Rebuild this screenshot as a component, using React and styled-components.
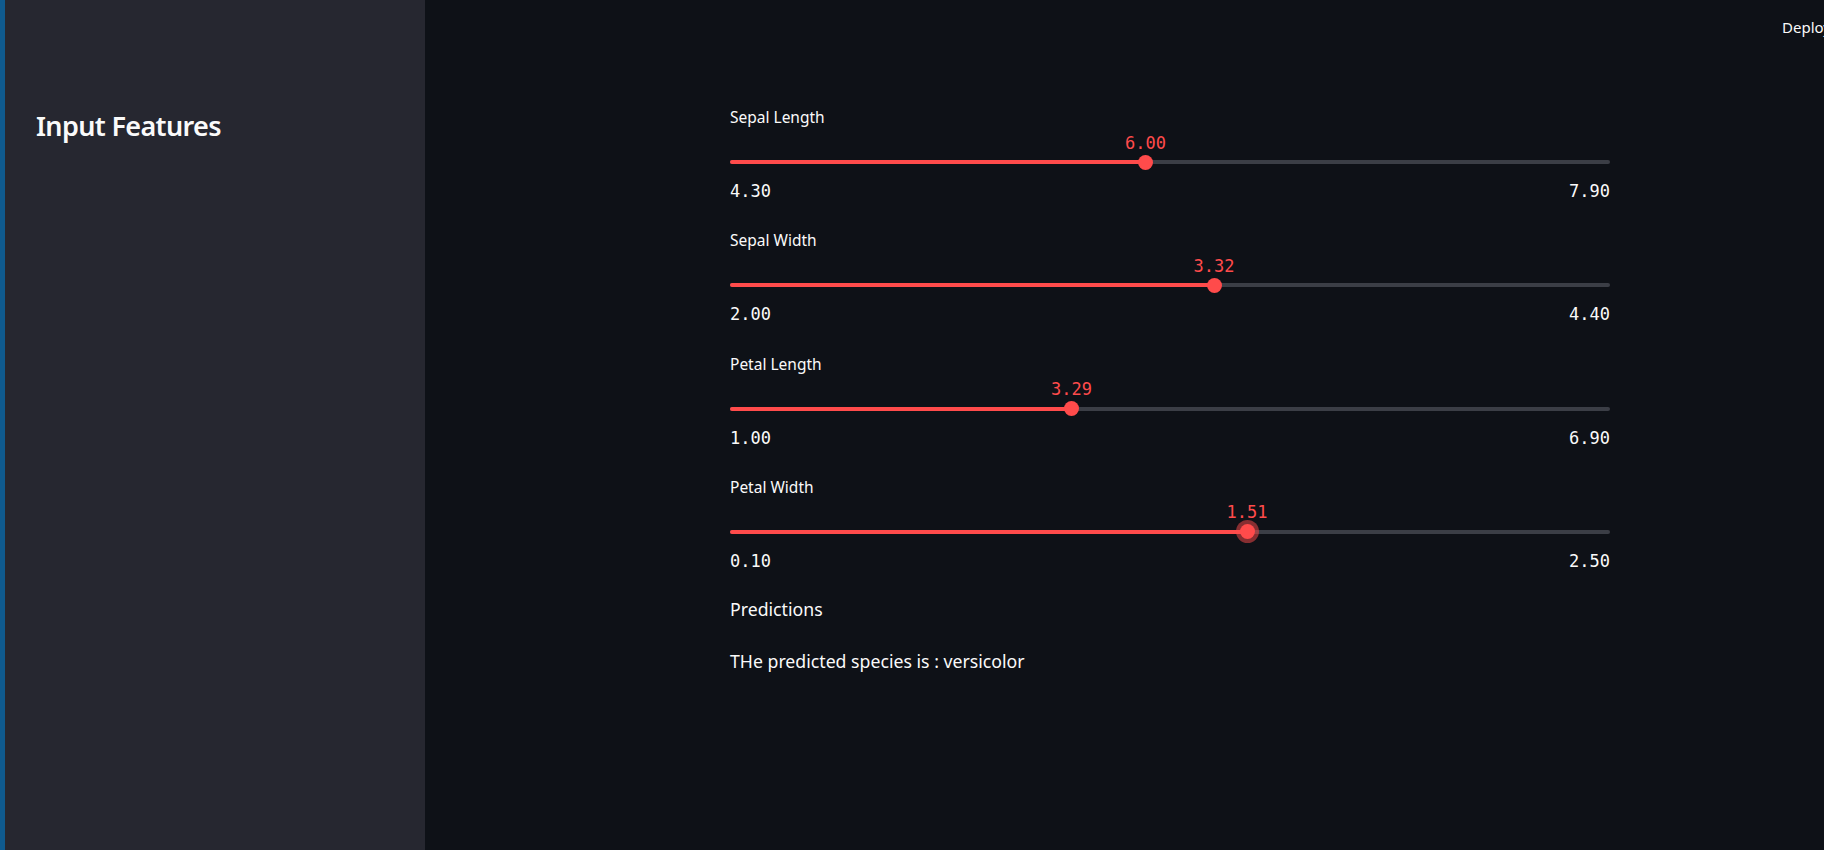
import styled, { createGlobalStyle } from 'styled-components';

const GlobalStyle = createGlobalStyle`
	html, body {
		margin: 0;
		padding: 0;
		background: #0e1117;
	}
	* {
		box-sizing: border-box;
	}
`;

const features = [
	{ label: 'Sepal Length', min: 4.3, max: 7.9, value: 6.0 },
	{ label: 'Sepal Width', min: 2.0, max: 4.4, value: 3.32 },
	{ label: 'Petal Length', min: 1.0, max: 6.9, value: 3.29 },
	{ label: 'Petal Width', min: 0.1, max: 2.5, value: 1.51, focused: true },
];

const Slider = ({ label, min, max, value, focused }) => {
	const pct = ((value - min) / (max - min)) * 100;

	return (
		<SliderBlock>
			<SliderLabel>{label}</SliderLabel>
			<SliderBody>
				<Track>
					<Fill style={{ width: `${pct}%` }} />
					<Thumb $focused={focused} style={{ left: `${pct}%` }}>
						<ThumbValue>{value.toFixed(2)}</ThumbValue>
					</Thumb>
				</Track>
			</SliderBody>
			<TickRow>
				<Tick>{min.toFixed(2)}</Tick>
				<Tick>{max.toFixed(2)}</Tick>
			</TickRow>
		</SliderBlock>
	);
};

const App = () => {
	return (
		<>
			<GlobalStyle />
			<Page>
				<Strip />
				<Sidebar>
					<SidebarTitle>Input Features</SidebarTitle>
				</Sidebar>
				<Main>
					<Toolbar>
						<DeployButton>Deploy</DeployButton>
					</Toolbar>
					<Content>
						<SliderList>
							{features.map((f) => (
								<Slider key={f.label} {...f} />
							))}
						</SliderList>
						<Subhead>Predictions</Subhead>
						<Result>THe predicted species is : versicolor</Result>
					</Content>
				</Main>
			</Page>
		</>
	);
};

export default App;

const Page = styled.div`
	display: flex;
	flex-direction: row;
	height: 100vh;
	width: 100vw;
	overflow: hidden;
	font-family: 'Noto Sans', 'Open Sans', sans-serif;
	color: #fafafa;
`;
const Strip = styled.div`
	width: 5px;
	flex-shrink: 0;
	background: #0f5a8e;
`;
const Sidebar = styled.aside`
	width: 420px;
	flex-shrink: 0;
	background: #262730;
	padding: 106px 31px 0;
`;
const SidebarTitle = styled.h2`
	margin: 0;
	font-size: 27px;
	line-height: 40px;
	font-weight: 600;
	letter-spacing: -0.65px;
`;
const Main = styled.main`
	flex: 1;
	display: flex;
	flex-direction: column;
	background: #0e1117;
	min-width: 0;
`;
const Toolbar = styled.div`
	height: 54px;
	display: flex;
	justify-content: flex-end;
	align-items: center;
	margin-right: -19px;
`;
const DeployButton = styled.span`
	font-size: 15px;
	line-height: 20px;
	color: #fafafa;
	padding: 0 12px;
	white-space: nowrap;
`;
const Content = styled.div`
	display: flex;
	flex-direction: column;
	width: 880px;
	margin-left: 305px;
	padding-top: 53px;
`;
const SliderList = styled.div`
	display: flex;
	flex-direction: column;
	gap: 29.3px;
`;
const SliderBlock = styled.div`
	display: flex;
	flex-direction: column;
`;
const SliderLabel = styled.div`
	font-size: 15.5px;
	line-height: 20px;
`;
const SliderBody = styled.div`
	padding-top: 33px;
`;
const Track = styled.div`
	position: relative;
	height: 4px;
	border-radius: 2px;
	background: #3b3e46;
`;
const Fill = styled.div`
	height: 100%;
	border-radius: 2px;
	background: #ff4b4b;
`;
const Thumb = styled.div`
	position: absolute;
	top: 50%;
	width: 15px;
	height: 15px;
	margin-left: -7.5px;
	margin-top: -7.5px;
	border-radius: 50%;
	background: #ff4b4b;
	box-shadow: ${(p) => (p.$focused ? '0 0 0 4px rgba(255, 75, 75, 0.5)' : 'none')};
`;
const ThumbValue = styled.div`
	position: absolute;
	bottom: 100%;
	left: 50%;
	transform: translateX(-50%);
	margin-bottom: 2px;
	font-family: 'DejaVu Sans Mono', 'Liberation Mono', monospace;
	font-size: 17px;
	line-height: 20px;
	color: #ff4b4b;
	white-space: nowrap;
`;
const TickRow = styled.div`
	display: flex;
	justify-content: space-between;
	margin-top: 17px;
`;
const Tick = styled.span`
	font-family: 'DejaVu Sans Mono', 'Liberation Mono', monospace;
	font-size: 17px;
	line-height: 20px;
	color: #fafafa;
`;
const Subhead = styled.p`
	margin: 25px 0 0;
	font-size: 17.7px;
	line-height: 26px;
`;
const Result = styled.p`
	margin: 26.3px 0 0;
	font-size: 17.7px;
	line-height: 26px;
`;
